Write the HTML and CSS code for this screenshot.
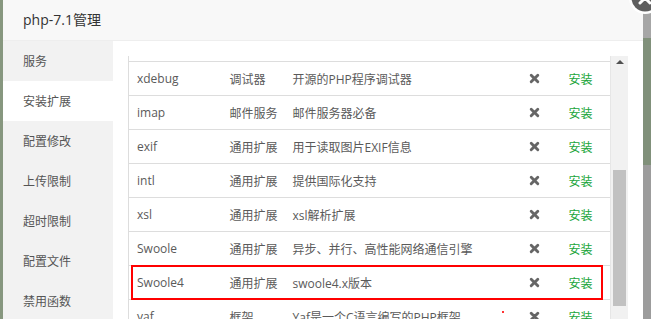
FILE: index.html
```html
<!DOCTYPE html>
<html lang="zh-CN">
<head>
    <meta charset="UTF-8">
    <title>php-7.1管理</title>
    <link rel="stylesheet" href="styles.css">
</head>
<body>
    <div class="shade shade-left"></div>
    <div class="layer">
        <div class="layer-title">php-7.1管理</div>
        <a class="layer-close" href="#">
            <svg width="34" height="34" viewBox="0 0 34 34">
                <circle cx="17" cy="17" r="16" fill="#fff"/>
                <circle cx="17" cy="17" r="13.5" fill="#5f5f5f"/>
                <path d="M12 12 L22 22 M22 12 L12 22" stroke="#fff" stroke-width="3" stroke-linecap="round"/>
            </svg>
        </a>
        <div class="layer-body">
            <ul class="side-menu">
                <li>服务</li>
                <li class="active">安装扩展</li>
                <li>配置修改</li>
                <li>上传限制</li>
                <li>超时限制</li>
                <li>配置文件</li>
                <li>禁用函数</li>
            </ul>
            <div class="content">
                <div class="table-box">
                    <div class="table-view">
                        <table class="ext-table">
                            <colgroup>
                                <col class="col-name">
                                <col class="col-type">
                                <col class="col-desc">
                                <col class="col-state">
                                <col>
                            </colgroup>
                            <tbody>
                                <tr><td></td><td></td><td></td><td class="state"></td><td class="op"></td></tr>
                                <tr><td>xdebug</td><td>调试器</td><td>开源的PHP程序调试器</td><td class="state"><svg class="x-icon" viewBox="0 0 10 10"><path d="M2 2 L8 8 M8 2 L2 8"/></svg></td><td class="op"><a href="#">安装</a></td></tr>
                                <tr><td>imap</td><td>邮件服务</td><td>邮件服务器必备</td><td class="state"><svg class="x-icon" viewBox="0 0 10 10"><path d="M2 2 L8 8 M8 2 L2 8"/></svg></td><td class="op"><a href="#">安装</a></td></tr>
                                <tr><td>exif</td><td>通用扩展</td><td>用于读取图片EXIF信息</td><td class="state"><svg class="x-icon" viewBox="0 0 10 10"><path d="M2 2 L8 8 M8 2 L2 8"/></svg></td><td class="op"><a href="#">安装</a></td></tr>
                                <tr><td>intl</td><td>通用扩展</td><td>提供国际化支持</td><td class="state"><svg class="x-icon" viewBox="0 0 10 10"><path d="M2 2 L8 8 M8 2 L2 8"/></svg></td><td class="op"><a href="#">安装</a></td></tr>
                                <tr><td>xsl</td><td>通用扩展</td><td>xsl解析扩展</td><td class="state"><svg class="x-icon" viewBox="0 0 10 10"><path d="M2 2 L8 8 M8 2 L2 8"/></svg></td><td class="op"><a href="#">安装</a></td></tr>
                                <tr><td>Swoole</td><td>通用扩展</td><td>异步、并行、高性能网络通信引擎</td><td class="state"><svg class="x-icon" viewBox="0 0 10 10"><path d="M2 2 L8 8 M8 2 L2 8"/></svg></td><td class="op"><a href="#">安装</a></td></tr>
                                <tr><td>Swoole4</td><td>通用扩展</td><td>swoole4.x版本</td><td class="state"><svg class="x-icon" viewBox="0 0 10 10"><path d="M2 2 L8 8 M8 2 L2 8"/></svg></td><td class="op"><a href="#">安装</a></td></tr>
                                <tr><td>yaf</td><td>框架</td><td>Yaf是一个C语言编写的PHP框架</td><td class="state"><svg class="x-icon" viewBox="0 0 10 10"><path d="M2 2 L8 8 M8 2 L2 8"/></svg></td><td class="op"><a href="#">安装</a></td></tr>
                            </tbody>
                        </table>
                        <div class="mark"></div>
                        <div class="dot"></div>
                    </div>
                    <div class="scrollbar">
                        <div class="scroll-up"></div>
                        <div class="scroll-thumb"></div>
                    </div>
                </div>
            </div>
        </div>
    </div>
    <div class="shade shade-right"></div>
</body>
</html>
```

FILE: styles.css
```css
/* General */
html, body {
    margin: 0;
    padding: 0;
    height: 319px;
    overflow: hidden;
}

body {
    display: flex;
    font-family: "Open Sans", "Noto Sans CJK SC", sans-serif;
    font-size: 12px;
    color: #555;
    background-color: #8b9984;
}

.shade {
    height: 100%;
}

.shade-left {
    width: 3px;
    background-color: #87977f;
}

.shade-right {
    flex: 1;
    background: linear-gradient(#a6a6a6 0, #a6a6a6 38px, #80907a 38px, #80907a 165px, #9c9c9c 165px);
}

/* Layer */
.layer {
    position: relative;
    width: 640px;
    height: 100%;
    background-color: #fff;
    display: flex;
    flex-direction: column;
}

.layer-title {
    height: 40px;
    line-height: 40px;
    padding-left: 20px;
    font-size: 14px;
    color: #333;
    background-color: #f8f8f8;
    border-bottom: 1px solid #eee;
}

.layer-close {
    position: absolute;
    top: -19px;
    right: -19px;
    width: 34px;
    height: 34px;
}

.layer-body {
    flex: 1;
    display: flex;
    min-height: 0;
}

/* Side menu */
.side-menu {
    width: 110px;
    margin: 0;
    padding: 0;
    list-style: none;
    background-color: #f2f2f2;
}

.side-menu li {
    height: 40px;
    line-height: 41px;
    padding-left: 20px;
    color: #555;
}

.side-menu li.active {
    background-color: #fff;
}

/* Content */
.content {
    flex: 1;
    padding: 15px 15px 0;
    min-height: 0;
}

.table-box {
    display: flex;
    height: 100%;
}

.table-view {
    position: relative;
    flex: 1;
    overflow: hidden;
}

.ext-table {
    width: 100%;
    margin-top: -28px;
    border-collapse: collapse;
    table-layout: fixed;
    border-left: 1px solid #ddd;
}

.col-name { width: 93px; }
.col-type { width: 63px; }
.col-desc { width: 233px; }
.col-state { width: 34px; }

.ext-table td {
    height: 33px;
    padding: 0 0 0 8px;
    border-bottom: 1px solid #ddd;
    white-space: nowrap;
    overflow: hidden;
    color: #5a5a5a;
}

.ext-table td.state {
    padding: 0;
    text-align: center;
}

.ext-table td.op {
    padding-left: 17px;
}

.ext-table a {
    color: #20a53a;
    text-decoration: none;
}

.x-icon {
    width: 11px;
    height: 11px;
    display: block;
    margin: 0 auto;
}

.x-icon path {
    stroke: #666;
    stroke-width: 2.6;
    stroke-linecap: round;
    fill: none;
}

/* annotation box */
.mark {
    position: absolute;
    left: 3px;
    right: 7px;
    top: 209px;
    height: 31px;
    border: 2px solid #f00;
}

.dot {
    position: absolute;
    left: 374px;
    top: 255px;
    width: 2px;
    height: 2px;
    background-color: #f33;
}

/* Scrollbar */
.scrollbar {
    width: 18px;
    background-color: #f1f1f1;
    border-left: 1px solid #e6e6e6;
    box-sizing: border-box;
}

.scroll-up {
    width: 0;
    height: 0;
    margin: 4px auto 0;
    border-left: 4px solid transparent;
    border-right: 4px solid transparent;
    border-bottom: 4px solid #505050;
}

.scroll-thumb {
    width: 13px;
    height: 136px;
    margin: 106px 0 0 2px;
    background-color: #c1c1c1;
}
```
